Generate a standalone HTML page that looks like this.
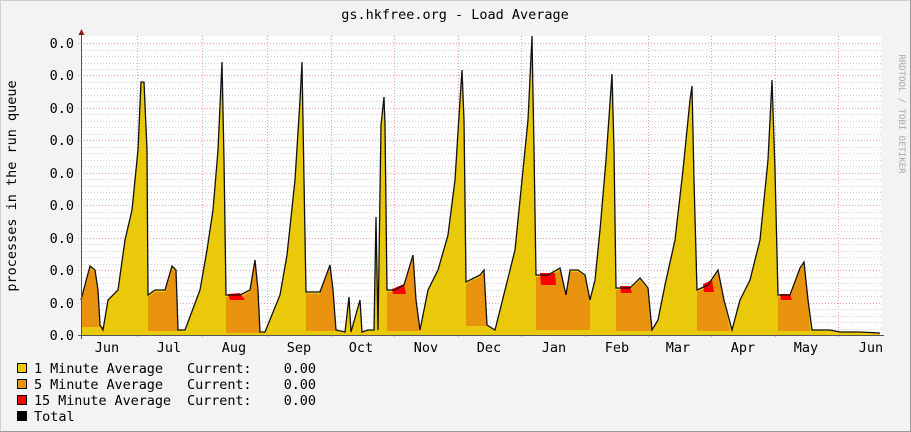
<!DOCTYPE html>
<html><head><meta charset="utf-8"><style>
html,body{margin:0;padding:0;width:911px;height:432px;overflow:hidden;background:#f3f3f3}
svg{display:block}
text{font-family:"DejaVu Sans Mono","Liberation Mono",monospace}
</style></head><body>
<svg id="g" width="911" height="432" xmlns="http://www.w3.org/2000/svg">
<rect x="0" y="0" width="911" height="432" fill="#f3f3f3"/>
<line x1="0" y1="0.5" x2="911" y2="0.5" stroke="#cfcfcf"/>
<line x1="0.5" y1="0" x2="0.5" y2="432" stroke="#cfcfcf"/>
<line x1="910.5" y1="0" x2="910.5" y2="432" stroke="#9a9a9a"/>
<line x1="0" y1="431.5" x2="911" y2="431.5" stroke="#9a9a9a"/>
<rect x="81" y="36" width="800" height="299" fill="#ffffff"/>
<g id="grid"></g>
<polygon fill="#eac80a" points="81,300 90,266 95,270 98,290 100,325 103,330 108,300 118,290 125,240 132,210 138,150 141,82 144,82 147,150 148,295 155,290 165,290 172,266 176,270 178,330 185,330 200,290 207,250 213,210 218,150 222,62 224,160 226,295 240,295 250,290 255,260 258,290 260,332 265,332 280,295 287,255 295,180 300,100 302,62 304,180 306,292 320,292 330,265 333,290 336,330 345,332 349,297 351,332 360,300 362,332 368,330 374,330 376,217 378,330 381,125 384,97 385,125 387,290 395,290 404,285 410,265 413,255 416,300 420,330 428,290 438,270 448,235 455,180 460,100 462,70 464,120 466,282 480,275 484,270 487,325 495,330 505,290 515,250 520,200 528,120 532,36 534,150 536,275 548,275 560,268 566,295 570,270 578,270 585,275 590,300 595,280 600,230 606,160 612,74 614,150 616,288 630,288 640,278 648,288 652,330 658,320 665,285 675,240 683,170 690,100 692,86 694,180 697,290 708,285 718,270 724,300 732,330 740,300 750,280 760,240 768,160 772,80 775,170 778,295 790,295 800,268 804,262 808,300 812,330 830,330 840,332 860,332 880,333 880,335 81,335"/>
<g fill="#e8920e">
<polygon points="81,300 90,268 95,272 98,292 100,326 103,331 103,327 81,327"/>
<polygon points="148,297 155,292 165,292 172,268 176,272 178,331 148,331"/>
<polygon points="226,297 240,297 250,292 255,262 258,292 260,333 226,333"/>
<polygon points="306,294 320,294 330,267 333,292 336,331 306,331"/>
<polygon points="387,292 395,292 404,287 410,267 413,257 416,302 420,331 387,331"/>
<polygon points="466,284 480,277 484,272 487,326 466,326"/>
<polygon points="536,277 548,277 560,270 566,297 570,272 578,272 585,277 590,302 590,330 536,330"/>
<polygon points="616,290 630,290 640,280 648,290 652,331 616,331"/>
<polygon points="697,292 708,287 718,272 724,302 730,331 697,331"/>
<polygon points="778,297 790,297 800,270 804,264 808,302 810,331 778,331"/>
</g>
<g fill="#ff0000">
<polygon points="228,294 240,293 245,300 230,300"/>
<polygon points="392,289 404,284 406,294 393,294"/>
<polygon points="540,273 555,273 556,285 541,285"/>
<polygon points="620,286 630,286 632,293 621,293"/>
<polygon points="703,284 712,280 714,292 704,292"/>
<polygon points="780,294 790,294 792,300 781,300"/>
</g>
<polyline fill="none" stroke="#111" stroke-width="1.3" points="81,300 90,266 95,270 98,290 100,325 103,330 108,300 118,290 125,240 132,210 138,150 141,82 144,82 147,150 148,295 155,290 165,290 172,266 176,270 178,330 185,330 200,290 207,250 213,210 218,150 222,62 224,160 226,295 240,295 250,290 255,260 258,290 260,332 265,332 280,295 287,255 295,180 300,100 302,62 304,180 306,292 320,292 330,265 333,290 336,330 345,332 349,297 351,332 360,300 362,332 368,330 374,330 376,217 378,330 381,125 384,97 385,125 387,290 395,290 404,285 410,265 413,255 416,300 420,330 428,290 438,270 448,235 455,180 460,100 462,70 464,120 466,282 480,275 484,270 487,325 495,330 505,290 515,250 520,200 528,120 532,36 534,150 536,275 548,275 560,268 566,295 570,270 578,270 585,275 590,300 595,280 600,230 606,160 612,74 614,150 616,288 630,288 640,278 648,288 652,330 658,320 665,285 675,240 683,170 690,100 692,86 694,180 697,290 708,285 718,270 724,300 732,330 740,300 750,280 760,240 768,160 772,80 775,170 778,295 790,295 800,268 804,262 808,300 812,330 830,330 840,332 860,332 880,333"/>
<line x1="81.5" y1="33" x2="81.5" y2="339" stroke="#555"/>
<line x1="78" y1="335.5" x2="884" y2="335.5" stroke="#555"/>
<polygon points="81.5,29 78.5,35 84.5,35" fill="#8b1a1a"/>
<g id="lbl" font-size="13.5" fill="#000"></g>
<text x="455" y="19" font-size="13.5" text-anchor="middle">gs.hkfree.org - Load Average</text>
<text transform="translate(16,186) rotate(-90)" font-size="13.5" text-anchor="middle">processes in the run queue</text>
<text transform="translate(899,114) rotate(90)" font-size="9" fill="#aaa" text-anchor="middle">RRDTOOL / TOBI OETIKER</text>
<g font-size="13.5">
<rect x="17.5" y="363.5" width="9" height="9" fill="#eac80a" stroke="#000"/>
<rect x="17.5" y="379.5" width="9" height="9" fill="#e8920e" stroke="#000"/>
<rect x="17.5" y="395.5" width="9" height="9" fill="#ff0000" stroke="#000"/>
<rect x="17.5" y="411.5" width="9" height="9" fill="#000" stroke="#000"/>
<text x="34" y="373" xml:space="preserve" textLength="282" lengthAdjust="spacing">1 Minute Average   Current:    0.00</text>
<text x="34" y="389" xml:space="preserve" textLength="282" lengthAdjust="spacing">5 Minute Average   Current:    0.00</text>
<text x="34" y="405" xml:space="preserve" textLength="282" lengthAdjust="spacing">15 Minute Average  Current:    0.00</text>
<text x="34" y="421">Total</text>
</g>
</svg>
<script>
var ns="http://www.w3.org/2000/svg",g=document.getElementById("grid"),l=document.getElementById("lbl");
function ln(x1,y1,x2,y2,c,d){var e=document.createElementNS(ns,"line");e.setAttribute("x1",x1);e.setAttribute("y1",y1);e.setAttribute("x2",x2);e.setAttribute("y2",y2);e.setAttribute("stroke",c);e.setAttribute("stroke-dasharray",d);g.appendChild(e);}
function tx(x,y,s,a){var e=document.createElementNS(ns,"text");e.setAttribute("x",x);e.setAttribute("y",y);e.setAttribute("text-anchor",a);e.textContent=s;l.appendChild(e);}
var step=32.44;
for(var i=0;i<46;i++){var y=Math.round(335-i*step/5)+0.5;if(y<36)break;if(i%5)ln(82,y,881,y,"#d0d0d0","1,2");}
for(var i=1;i<10;i++){var y=Math.round(335-i*step)+0.5;ln(78,y,881,y,"#f0a0a0","1,2");}
var vx=[137,202,267,331,394,458,521,585,648,711,775,838];
vx.forEach(function(x){ln(x+0.5,36,x+0.5,338,"#f0a0a0","1,2");});
for(var i=0;i<10;i++){tx(74,Math.round(335-i*step)+5,"0.0","end");}
var m=[["Jun",107],["Jul",169],["Aug",234],["Sep",299],["Oct",361],["Nov",426],["Dec",489],["Jan",554],["Feb",617],["Mar",678],["Apr",743],["May",806],["Jun",871]];
m.forEach(function(a){tx(a[1],352,a[0],"middle");});
</script>
</body></html>
